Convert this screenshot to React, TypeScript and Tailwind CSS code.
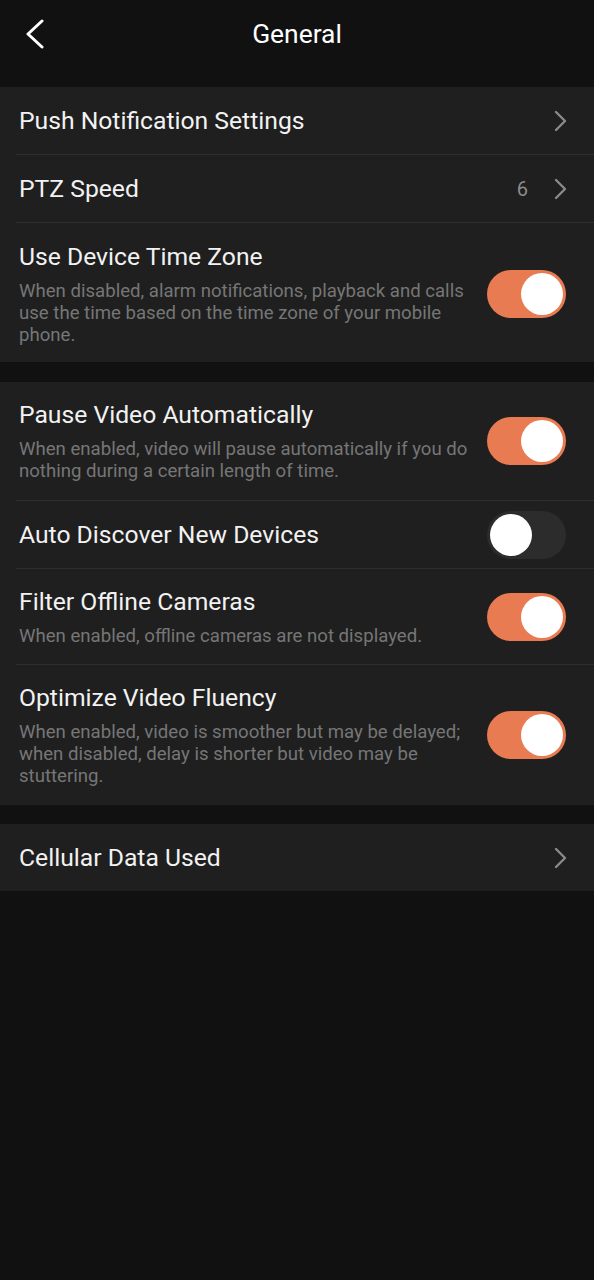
import React from "react";

const font = { fontFamily: "Roboto, 'Noto Sans', sans-serif" };

function Chevron() {
  return (
    <svg width="14" height="22" viewBox="0 0 14 22" fill="none">
      <path d="M3 2 L12 11 L3 20" stroke="#8a8a8a" strokeWidth="2.4" strokeLinecap="round" strokeLinejoin="round" />
    </svg>
  );
}

function Toggle({ on }: { on: boolean }) {
  return (
    <div
      className={`w-[79px] h-[48px] rounded-full flex items-center shrink-0 ${
        on ? "bg-[#e97b52] justify-end pr-[3px]" : "bg-[#2c2c2c] justify-start pl-[3px]"
      }`}
    >
      <div className="w-[42px] h-[42px] rounded-full bg-white" />
    </div>
  );
}

function Divider() {
  return <div className="h-px bg-[#2f2f2f] ml-4" />;
}

function NavRow({ title, value }: { title: string; value?: string }) {
  return (
    <div className="h-[67px] flex items-center pl-[19px] pr-[27px] pt-[1px]">
      <span className="text-[24.7px] text-[#f2f2f2] flex-1">{title}</span>
      {value && <span className="text-[20px] text-[#8c8c8c] mr-[25px]">{value}</span>}
      <Chevron />
    </div>
  );
}

function ToggleRow({ title, desc, on, pt = "pt-[18px]", pb = "pb-[18px]" }: { title: string; desc?: string; on: boolean; pt?: string; pb?: string }) {
  if (!desc) {
    return (
      <div className="h-[67px] flex items-center pl-[19px] pr-[28px]">
        <span className="text-[24.7px] text-[#f2f2f2] flex-1 pt-[1px]">{title}</span>
        <Toggle on={on} />
      </div>
    );
  }
  return (
    <div className={`flex items-center pl-[19px] pr-[28px] ${pt} ${pb}`}>
      <div className="w-[452px]">
        <div className="text-[24.7px] leading-[30px] text-[#f2f2f2]">{title}</div>
        <div className="mt-[8px] text-[18.6px] leading-[22px] text-[#767676]">{desc}</div>
      </div>
      <div className="flex-1" />
      <Toggle on={on} />
    </div>
  );
}

export default function App() {
  return (
    <div className="w-[594px] min-h-[1280px] bg-[#111111]" style={font}>
      <div className="h-[87px]">
        <div className="h-[70px] flex items-center relative">
          <div className="absolute left-[24px] top-[19px]">
            <svg width="22" height="30" viewBox="0 0 22 30" fill="none">
              <path d="M18 2 L4 15 L18 28" stroke="#ffffff" strokeWidth="3" strokeLinecap="round" strokeLinejoin="round" />
            </svg>
          </div>
          <div className="w-full text-center text-[26.4px] text-white">General</div>
        </div>
      </div>

      <div className="bg-[#1f1f1f]">
        <NavRow title="Push Notification Settings" />
        <Divider />
        <NavRow title="PTZ Speed" value="6" />
        <Divider />
        <ToggleRow
          title="Use Device Time Zone"
          desc="When disabled, alarm notifications, playback and calls use the time based on the time zone of your mobile phone."
          on
          pt="pt-[19px]"
          pb="pb-[16px]"
        />
      </div>

      <div className="h-[20px]" />

      <div className="bg-[#1f1f1f]">
        <ToggleRow
          title="Pause Video Automatically"
          desc="When enabled, video will pause automatically if you do nothing during a certain length of time."
          on
        />
        <Divider />
        <ToggleRow title="Auto Discover New Devices" on={false} />
        <Divider />
        <ToggleRow title="Filter Offline Cameras" desc="When enabled, offline cameras are not displayed." on pb="pb-[17px]" />
        <Divider />
        <ToggleRow
          title="Optimize Video Fluency"
          desc="When enabled, video is smoother but may be delayed; when disabled, delay is shorter but video may be stuttering."
          on
        />
      </div>

      <div className="h-[19px]" />

      <div className="bg-[#1f1f1f]">
        <NavRow title="Cellular Data Used" />
      </div>
    </div>
  );
}
